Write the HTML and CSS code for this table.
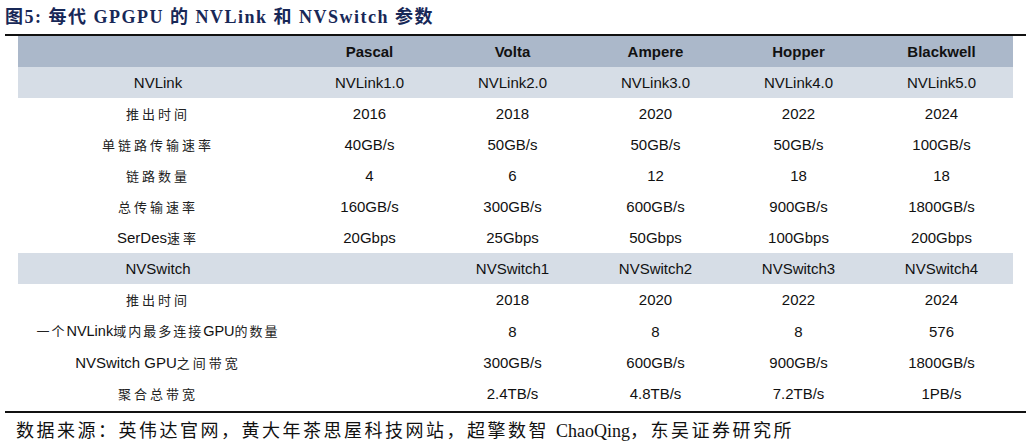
FILE: index.html
```html
<!DOCTYPE html>
<html lang="zh">
<head>
<meta charset="utf-8">
<link rel="stylesheet" href="styles.css">
</head>
<body>
<div class="page">
  <h1 class="title">图5: 每代 GPGPU 的 NVLink 和 NVSwitch 参数</h1>
  <div class="rule"></div>
  <table class="spec">
    <colgroup>
      <col class="c-label"><col class="c-val"><col class="c-val"><col class="c-val"><col class="c-val"><col class="c-val">
    </colgroup>
    <tr class="head"><td></td><td>Pascal</td><td>Volta</td><td>Ampere</td><td>Hopper</td><td>Blackwell</td></tr>
    <tr class="band"><td>NVLink</td><td>NVLink1.0</td><td>NVLink2.0</td><td>NVLink3.0</td><td>NVLink4.0</td><td>NVLink5.0</td></tr>
    <tr><td class="cn">推出时间</td><td>2016</td><td>2018</td><td>2020</td><td>2022</td><td>2024</td></tr>
    <tr><td class="cn">单链路传输速率</td><td>40GB/s</td><td>50GB/s</td><td>50GB/s</td><td>50GB/s</td><td>100GB/s</td></tr>
    <tr><td class="cn">链路数量</td><td>4</td><td>6</td><td>12</td><td>18</td><td>18</td></tr>
    <tr><td class="cn">总传输速率</td><td>160GB/s</td><td>300GB/s</td><td>600GB/s</td><td>900GB/s</td><td>1800GB/s</td></tr>
    <tr><td>SerDes<span class="cn">速率</span></td><td>20Gbps</td><td>25Gbps</td><td>50Gbps</td><td>100Gbps</td><td>200Gbps</td></tr>
    <tr class="band"><td>NVSwitch</td><td></td><td>NVSwitch1</td><td>NVSwitch2</td><td>NVSwitch3</td><td>NVSwitch4</td></tr>
    <tr><td class="cn">推出时间</td><td></td><td>2018</td><td>2020</td><td>2022</td><td>2024</td></tr>
    <tr><td class="mixed"><span class="cn">一个</span>NVLink<span class="cn">域内最多连接</span>GPU<span class="cn">的数量</span></td><td></td><td>8</td><td>8</td><td>8</td><td>576</td></tr>
    <tr><td>NVSwitch GPU<span class="cn">之间带宽</span></td><td></td><td>300GB/s</td><td>600GB/s</td><td>900GB/s</td><td>1800GB/s</td></tr>
    <tr><td class="cn">聚合总带宽</td><td></td><td>2.4TB/s</td><td>4.8TB/s</td><td>7.2TB/s</td><td>1PB/s</td></tr>
  </table>
  <div class="rule rule-bottom"></div>
  <p class="source">数据来源：英伟达官网，黄大年茶思屋科技网站，超擎数智 <span class="latin">ChaoQing</span>，东吴证券研究所</p>
</div>
</body>
</html>
```

FILE: styles.css
```css
html, body {
  margin: 0;
  padding: 0;
  background: #ffffff;
}

.page {
  width: 1032px;
  height: 445px;
  font-family: "Liberation Sans", Arial, "Noto Sans CJK SC", sans-serif;
  color: #111111;
}

.title {
  margin: 0;
  padding: 6px 0 0 5px;
  height: 28px;
  box-sizing: content-box;
  font-family: "Liberation Serif", "Noto Sans CJK SC", serif;
  font-size: 18px;
  line-height: 22px;
  font-weight: bold;
  color: #182857;
  letter-spacing: 1.5px;
  white-space: nowrap;
}

.rule {
  margin-left: 5px;
  width: 1021px;
  height: 2px;
  background: #111111;
}

.rule-bottom {
  margin-top: 2px;
}

.spec {
  margin-left: 18px;
  width: 995px;
  border-collapse: collapse;
  table-layout: fixed;
}

.c-label { width: 280px; }
.c-val { width: 143px; }

.spec td {
  height: 31px;
  padding: 0;
  text-align: center;
  vertical-align: middle;
  font-size: 15px;
  line-height: 31px;
  white-space: nowrap;
}

.spec .head td {
  background: #abb8ca;
  font-weight: bold;
}

.spec .band td {
  background: #d6dde6;
}

.spec .cn {
  font-family: "Noto Sans CJK SC", sans-serif;
  font-size: 13px;
  letter-spacing: 3px;
  color: #222222;
}

.spec td.mixed {
  font-size: 14.5px;
}

.spec .mixed .cn {
  letter-spacing: 2px;
}

.source {
  margin: 6px 0 0 16px;
  font-family: "Liberation Serif", "Noto Sans CJK SC", serif;
  font-size: 18px;
  line-height: 24px;
  letter-spacing: 2.5px;
  color: #111111;
  white-space: nowrap;
}

.latin {
  letter-spacing: 0;
}
```
